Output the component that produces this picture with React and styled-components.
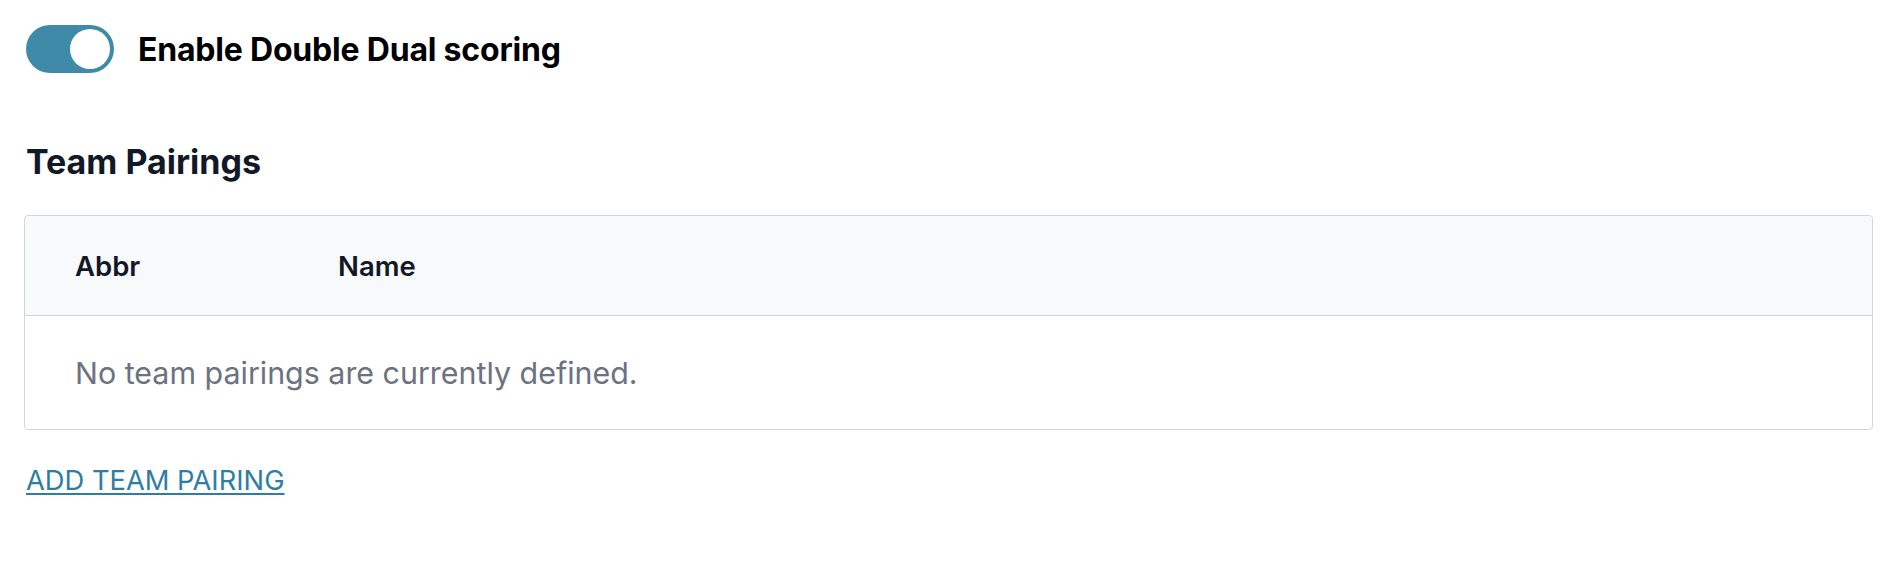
import React, { useState } from 'react';
import styled, { createGlobalStyle } from 'styled-components';

const GlobalStyle = createGlobalStyle`
  body {
    margin: 0;
    background: #fff;
    font-family: Inter, "Noto Sans", sans-serif;
  }
`;

function App() {
  const [doubleDual, setDoubleDual] = useState(true);
  const [pairings] = useState([]);

  return (
    <Page>
      <GlobalStyle />
      <ToggleRow>
        <Switch
          role="switch"
          aria-checked={doubleDual}
          $on={doubleDual}
          onClick={() => setDoubleDual(!doubleDual)}
        >
          <Thumb $on={doubleDual} />
        </Switch>
        <ToggleLabel>Enable Double Dual scoring</ToggleLabel>
      </ToggleRow>

      <Heading>Team Pairings</Heading>

      <Table>
        <thead>
          <tr>
            <HeadCell $width="213px">Abbr</HeadCell>
            <HeadCell>Name</HeadCell>
          </tr>
        </thead>
        <tbody>
          {pairings.length === 0 && (
            <tr>
              <EmptyCell colSpan={2}>No team pairings are currently defined.</EmptyCell>
            </tr>
          )}
        </tbody>
      </Table>

      <AddLink href="#" onClick={(e) => e.preventDefault()}>ADD TEAM PAIRING</AddLink>
    </Page>
  );
}

const Page = styled.div`
  display: flex;
  flex-direction: column;
  align-items: flex-start;
  padding: 25px 21px 0 24px;
  min-height: 580px;
  box-sizing: border-box;
`;

const ToggleRow = styled.div`
  display: flex;
  align-items: center;
  gap: 24px;
  margin-left: 2px;
`;

const Switch = styled.button`
  width: 88px;
  height: 48px;
  border: none;
  border-radius: 24px;
  padding: 4px;
  background: ${(p) => (p.$on ? '#3e8aa8' : '#cbd5e1')};
  display: flex;
  justify-content: ${(p) => (p.$on ? 'flex-end' : 'flex-start')};
  cursor: pointer;
  box-sizing: border-box;
`;

const Thumb = styled.span`
  width: 40px;
  height: 40px;
  border-radius: 50%;
  background: #fff;
`;

const ToggleLabel = styled.span`
  font-size: 32px;
  font-weight: 700;
  color: #000;
  letter-spacing: -0.2px;
`;

const Heading = styled.h2`
  margin: 69px 0 0 2px;
  font-size: 34px;
  line-height: 40px;
  font-weight: 700;
  color: #111827;
`;

const Table = styled.table`
  margin-top: 33px;
  width: 100%;
  border: 1px solid #d1d5db;
  border-radius: 4px;
  border-spacing: 0;
  text-align: left;
`;

const HeadCell = styled.th`
  width: ${(p) => p.$width || 'auto'};
  height: 99px;
  padding: 0 0 0 50px;
  background: #f8f9fb;
  border-bottom: 1px solid #d1d5db;
  font-size: 27.5px;
  font-weight: 600;
  color: #111827;
  &:first-child { border-top-left-radius: 4px; }
  &:last-child { border-top-right-radius: 4px; }
`;

const EmptyCell = styled.td`
  height: 113px;
  padding: 0 0 0 50px;
  font-size: 30.4px;
  color: #6b7280;
`;

const AddLink = styled.a`
  margin: 34px 0 0 2px;
  font-size: 27.3px;
  line-height: 34px;
  color: #2f7ea1;
  text-decoration: underline;
  text-underline-offset: 3px;
`;

export default App;
